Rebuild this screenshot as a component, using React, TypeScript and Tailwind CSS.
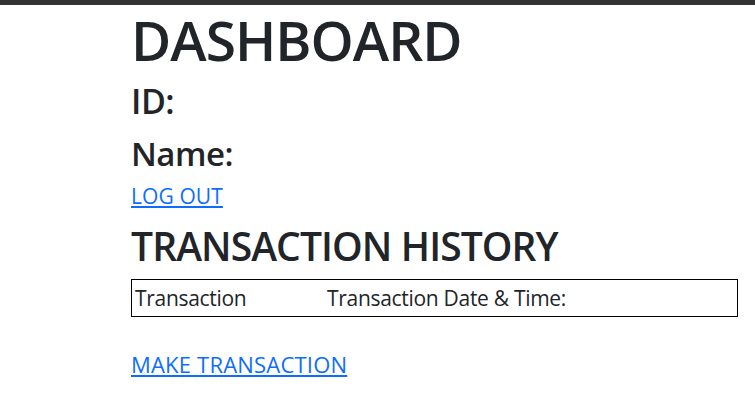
export default function App() {
  const font = { fontFamily: '"Open Sans", "Noto Sans", sans-serif' };
  return (
    <div className="min-h-[420px] bg-white text-[#212529]" style={font}>
      <div className="h-[5px] bg-[#333333]" />
      <div className="ml-[131px] mr-[17px]">
        <h1 className="mt-[7px] text-[55px] leading-[56px] font-semibold tracking-[-1px]">DASHBOARD</h1>
        <h3 className="mt-[16px] text-[34px] leading-[35px] font-semibold tracking-[-0.5px]">ID:</h3>
        <h3 className="mt-[18px] text-[33px] leading-[34px] font-semibold tracking-[-0.5px]">Name:</h3>
        <a href="#" className="mt-[15px] block w-fit text-[21px] leading-[21px] font-medium tracking-[0.1px] text-[#0d6efd] underline">
          LOG OUT
        </a>
        <h2 className="mt-[19px] text-[39px] leading-[40px] font-semibold tracking-[-0.9px]">TRANSACTION HISTORY</h2>
        <div className="mt-[13px] flex border border-black pt-[8px] pb-[7px] pl-[3px] text-[21px] leading-[21px] tracking-[-0.3px]">
          <div className="w-[192px]">Transaction</div>
          <div>Transaction Date &amp; Time:</div>
        </div>
        <a href="#" className="mt-[36px] block w-fit text-[22px] leading-[22px] font-medium tracking-[0.2px] text-[#0d6efd] underline">
          MAKE TRANSACTION
        </a>
      </div>
    </div>
  );
}
